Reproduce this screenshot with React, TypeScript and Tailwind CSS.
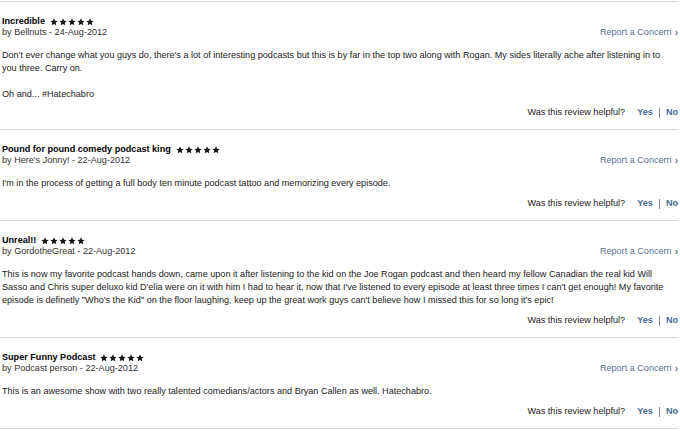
import React from "react";

type Review = {
  title: string;
  author: string;
  date: string;
  lines: string[];
  tight?: boolean;
};

const reviews: Review[] = [
  {
    title: "Incredible",
    author: "Bellnuts",
    date: "24-Aug-2012",
    lines: [
      "Don't ever change what you guys do, there's a lot of interesting podcasts but this is by far in the top two along with Rogan. My sides literally ache after listening in to",
      "you three. Carry on.",
      "",
      "Oh and... #Hatechabro",
    ],
    tight: true,
  },
  {
    title: "Pound for pound comedy podcast king",
    author: "Here's Jonny!",
    date: "22-Aug-2012",
    lines: [
      "I'm in the process of getting a full body ten minute podcast tattoo and memorizing every episode.",
    ],
  },
  {
    title: "Unreal!!",
    author: "GordotheGreat",
    date: "22-Aug-2012",
    lines: [
      "This is now my favorite podcast hands down, came upon it after listening to the kid on the Joe Rogan podcast and then heard my fellow Canadian the real kid Will",
      "Sasso and Chris super deluxo kid D'elia were on it with him I had to hear it, now that I've listened to every episode at least three times I can't get enough! My favorite",
      "episode is definetly \"Who's the Kid\" on the floor laughing, keep up the great work guys can't believe how I missed this for so long it's epic!",
    ],
  },
  {
    title: "Super Funny Podcast",
    author: "Podcast person",
    date: "22-Aug-2012",
    lines: [
      "This is an awesome show with two really talented comedians/actors and Bryan Callen as well. Hatechabro.",
    ],
  },
];

function Star() {
  return (
    <svg width="8" height="8" viewBox="0 0 24 24" className="block">
      <path
        d="M12 1l3.2 7.3 7.9.7-6 5.2 1.8 7.8L12 17.9 5.1 22l1.8-7.8-6-5.2 7.9-.7z"
        fill="#151515"
      />
    </svg>
  );
}

function Stars() {
  return (
    <span className="ml-[5px] inline-flex items-center gap-[1px]">
      <Star />
      <Star />
      <Star />
      <Star />
      <Star />
    </span>
  );
}

function ReviewBlock({ r }: { r: Review }) {
  return (
    <div
      className={
        r.tight
          ? "border-t border-[#d9d9d9] pl-[2px] pt-[14px] pb-[11px]"
          : "border-t border-[#d9d9d9] pl-[2px] pt-[14px] pb-[11px]"
      }
    >
      <div className="flex items-end justify-between">
        <div>
          <div className="flex items-center font-bold text-black leading-[11px]">
            <span>{r.title}</span>
            <Stars />
          </div>
          <div className="text-[#333] leading-[11px]">
            by {r.author} - {r.date}
          </div>
        </div>
        <div className="flex items-center leading-[11px] text-[#5a7191]">
          <span>Report a Concern</span>
          <span className="ml-[3px] text-[10px] font-bold leading-[11px]">›</span>
        </div>
      </div>
      <div className="mt-[11px] text-[#222] leading-[13px]">
        {r.lines.map((l, i) => (
          <div key={i} className="h-[13px] whitespace-nowrap">
            {l}
          </div>
        ))}
      </div>
      <div
        className={
          r.tight
            ? "mt-[6px] flex items-center justify-end leading-[11px] text-[#222]"
            : "mt-[8px] flex items-center justify-end leading-[11px] text-[#222]"
        }
      >
        <span>Was this review helpful?</span>
        <span className="ml-[12px] font-bold text-[#4a6a92]">Yes</span>
        <span className="mx-[6px] h-[10px] w-px bg-[#8a8a8a]" />
        <span className="font-bold text-[#4a6a92]">No</span>
      </div>
    </div>
  );
}

export default function App() {
  return (
    <div className="h-[431px] w-[680px] overflow-hidden bg-white pt-[1px] font-['Liberation_Sans',Arial,sans-serif] text-[9.1px]">
      <div className="w-[678px]">
        {reviews.map((r, i) => (
          <ReviewBlock key={i} r={r} />
        ))}
        <div className="border-t border-[#d9d9d9]" />
      </div>
    </div>
  );
}
